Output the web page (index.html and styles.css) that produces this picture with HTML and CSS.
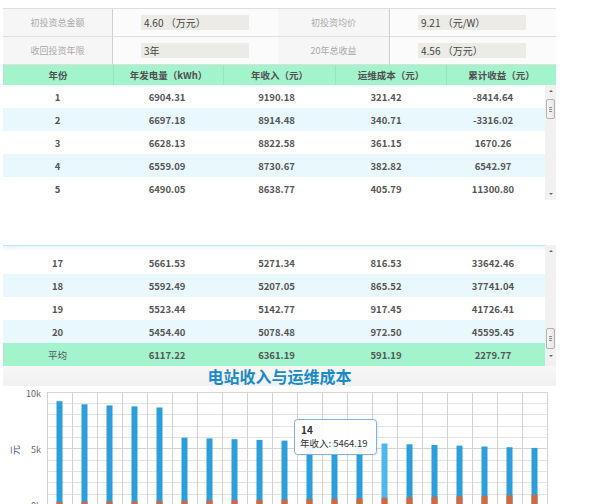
FILE: index.html
```html
<!DOCTYPE html>
<html lang="zh">
<head>
<meta charset="utf-8">
<link rel="stylesheet" href="styles.css">
</head>
<body>
<div class="page">
  <div class="info">
    <div class="lbl">初投资总金额</div>
    <div class="val"><span class="box">4.60 （万元）</span></div>
    <div class="lbl">初投资均价</div>
    <div class="val"><span class="box">9.21 （元/W）</span></div>
    <div class="lbl">收回投资年限</div>
    <div class="val"><span class="box">3年</span></div>
    <div class="lbl">20年总收益</div>
    <div class="val"><span class="box">4.56 （万元）</span></div>
  </div>

  <div class="thead">
    <div>年份</div><div>年发电量（kWh）</div><div>年收入（元）</div><div>运维成本（元）</div><div>累计收益（元）</div>
  </div>

  <div class="tbody">
    <div class="rows">
      <div class="row"><span>1</span><span>6904.31</span><span>9190.18</span><span>321.42</span><span>-8414.64</span></div>
      <div class="row alt"><span>2</span><span>6697.18</span><span>8914.48</span><span>340.71</span><span>-3316.02</span></div>
      <div class="row"><span>3</span><span>6628.13</span><span>8822.58</span><span>361.15</span><span>1670.26</span></div>
      <div class="row alt"><span>4</span><span>6559.09</span><span>8730.67</span><span>382.82</span><span>6542.97</span></div>
      <div class="row"><span>5</span><span>6490.05</span><span>8638.77</span><span>405.79</span><span>11300.80</span></div>
    </div>
    <div class="scroll">
      <div class="arrow up"></div>
      <div class="thumb thumb-top"><i></i><i></i><i></i></div>
      <div class="fill"></div>
      <div class="arrow down"></div>
    </div>
  </div>

  <div class="tbody second">
    <div class="rows">
      <div class="shade"></div>
      <div class="row"><span>17</span><span>5661.53</span><span>5271.34</span><span>816.53</span><span>33642.46</span></div>
      <div class="row alt"><span>18</span><span>5592.49</span><span>5207.05</span><span>865.52</span><span>37741.04</span></div>
      <div class="row"><span>19</span><span>5523.44</span><span>5142.77</span><span>917.45</span><span>41726.41</span></div>
      <div class="row alt"><span>20</span><span>5454.40</span><span>5078.48</span><span>972.50</span><span>45595.45</span></div>
      <div class="row avg"><span class="cn">平均</span><span>6117.22</span><span>6361.19</span><span>591.19</span><span>2279.77</span></div>
    </div>
    <div class="scroll">
      <div class="arrow up"></div>
      <div class="thumb thumb-bottom"><i></i><i></i><i></i></div>
      <div class="fill"></div>
      <div class="arrow down"></div>
    </div>
  </div>

  <div class="chart">
    <div class="chart-title">电站收入与运维成本</div>
    <svg class="plot" width="553" height="130" viewBox="0 0 553 130" xmlns="http://www.w3.org/2000/svg">
      <g stroke="#e3e3e3" stroke-width="1">
        <line x1="44" y1="17.5" x2="544" y2="17.5"/>
        <line x1="44" y1="28.5" x2="544" y2="28.5"/>
        <line x1="44" y1="40.5" x2="544" y2="40.5"/>
        <line x1="44" y1="51.5" x2="544" y2="51.5"/>
        <line x1="44" y1="74.5" x2="544" y2="74.5"/>
        <line x1="44" y1="85.5" x2="544" y2="85.5"/>
        <line x1="44" y1="96.5" x2="544" y2="96.5"/>
        <line x1="44" y1="108.5" x2="544" y2="108.5"/>
      </g>
      <g stroke="#d4d4d4" stroke-width="1">
        <line x1="44" y1="6.5" x2="544" y2="6.5"/>
        <line x1="44" y1="62.5" x2="544" y2="62.5"/>
        <line x1="44" y1="119.5" x2="544" y2="119.5"/>
      </g>
      <g stroke="#d2d2d2" stroke-width="1">
        <line x1="44.5" y1="6" x2="44.5" y2="120"/>
        <line x1="69.5" y1="6" x2="69.5" y2="120"/>
        <line x1="94.5" y1="6" x2="94.5" y2="120"/>
        <line x1="119.5" y1="6" x2="119.5" y2="120"/>
        <line x1="144.5" y1="6" x2="144.5" y2="120"/>
        <line x1="169.5" y1="6" x2="169.5" y2="120"/>
        <line x1="194.5" y1="6" x2="194.5" y2="120"/>
        <line x1="219.5" y1="6" x2="219.5" y2="120"/>
        <line x1="244.5" y1="6" x2="244.5" y2="120"/>
        <line x1="269.5" y1="6" x2="269.5" y2="120"/>
        <line x1="294.5" y1="6" x2="294.5" y2="120"/>
        <line x1="319.5" y1="6" x2="319.5" y2="120"/>
        <line x1="344.5" y1="6" x2="344.5" y2="120"/>
        <line x1="369.5" y1="6" x2="369.5" y2="120"/>
        <line x1="394.5" y1="6" x2="394.5" y2="120"/>
        <line x1="419.5" y1="6" x2="419.5" y2="120"/>
        <line x1="444.5" y1="6" x2="444.5" y2="120"/>
        <line x1="469.5" y1="6" x2="469.5" y2="120"/>
        <line x1="494.5" y1="6" x2="494.5" y2="120"/>
        <line x1="519.5" y1="6" x2="519.5" y2="120"/>
        <line x1="544.5" y1="6" x2="544.5" y2="120"/>
      </g>
      <g class="ylab" font-size="9" fill="#666" text-anchor="end">
        <text x="38" y="10.5">10k</text>
        <text x="38" y="66.5">5k</text>
        <text x="38" y="123">0k</text>
      </g>
      <text class="ytitle" x="0" y="0" transform="translate(16 64) rotate(-90)" text-anchor="middle" font-size="10" fill="#4d6680">元</text>
      <g fill="#2a9fdc">
        <rect x="53.5" y="15.2" width="6" height="104.4"/>
        <rect x="78.5" y="18.3" width="6" height="101.3"/>
        <rect x="103.5" y="19.4" width="6" height="100.2"/>
        <rect x="128.5" y="20.4" width="6" height="99.2"/>
        <rect x="153.5" y="21.5" width="6" height="98.1"/>
        <rect x="178.5" y="51.7" width="6" height="67.9"/>
        <rect x="203.5" y="52.4" width="6" height="67.2"/>
        <rect x="228.5" y="53.2" width="6" height="66.4"/>
        <rect x="253.5" y="53.9" width="6" height="65.7"/>
        <rect x="278.5" y="54.6" width="6" height="65.0"/>
        <rect x="303.5" y="55.3" width="6" height="64.3"/>
        <rect x="328.5" y="56.1" width="6" height="63.5"/>
        <rect x="353.5" y="56.8" width="6" height="62.8"/>
        <rect x="378.5" y="57.5" width="6" height="62.1" fill="#4cb8ee"/>
        <rect x="403.5" y="58.3" width="6" height="61.3"/>
        <rect x="428.5" y="59.0" width="6" height="60.6"/>
        <rect x="453.5" y="59.7" width="6" height="59.9"/>
        <rect x="478.5" y="60.5" width="6" height="59.1"/>
        <rect x="503.5" y="61.2" width="6" height="58.4"/>
        <rect x="528.5" y="61.9" width="6" height="57.7"/>
      </g>
      <g fill="#d2683f">
        <rect x="53.5" y="116.0" width="6" height="3.6"/>
        <rect x="78.5" y="115.7" width="6" height="3.9"/>
        <rect x="103.5" y="115.5" width="6" height="4.1"/>
        <rect x="128.5" y="115.3" width="6" height="4.3"/>
        <rect x="153.5" y="115.0" width="6" height="4.6"/>
        <rect x="178.5" y="114.7" width="6" height="4.9"/>
        <rect x="203.5" y="114.4" width="6" height="5.2"/>
        <rect x="228.5" y="114.1" width="6" height="5.5"/>
        <rect x="253.5" y="113.8" width="6" height="5.8"/>
        <rect x="278.5" y="113.4" width="6" height="6.2"/>
        <rect x="303.5" y="113.1" width="6" height="6.5"/>
        <rect x="328.5" y="112.7" width="6" height="6.9"/>
        <rect x="353.5" y="112.3" width="6" height="7.3"/>
        <rect x="378.5" y="111.8" width="6" height="7.8"/>
        <rect x="403.5" y="111.3" width="6" height="8.3"/>
        <rect x="428.5" y="110.9" width="6" height="8.7"/>
        <rect x="453.5" y="110.3" width="6" height="9.3"/>
        <rect x="478.5" y="109.8" width="6" height="9.8"/>
        <rect x="503.5" y="109.2" width="6" height="10.4"/>
        <rect x="528.5" y="108.6" width="6" height="11.0"/>
      </g>
      <g class="tip">
        <rect x="292.5" y="33.5" width="82" height="35" rx="3" ry="3" fill="#000" opacity="0.06" transform="translate(1 1)"/>
        <rect x="291.5" y="33.5" width="82" height="35" rx="3" ry="3" fill="#ffffff" fill-opacity="0.92" stroke="#7fb2d4" stroke-width="1"/>
        <text x="298" y="48" font-size="10" font-weight="bold" fill="#333">14</text>
        <text x="297" y="61" font-size="9.5" fill="#333">年收入: 5464.19</text>
      </g>
    </svg>
  </div>
</div>
</body>
</html>
```

FILE: styles.css
```css
html, body {
  margin: 0;
  padding: 0;
  background: #ffffff;
}

body {
  font-family: "Noto Sans CJK SC", "Noto Sans", sans-serif;
  color: #555;
}

.page {
  width: 553px;
  margin-left: 3px;
  padding-top: 8px;
}

/* info table */
.info {
  display: grid;
  grid-template-columns: 110px 165px 112px 166px;
  border-top: 1px solid #dedede;
}

.info > div {
  height: 27px;
  border-bottom: 1px solid #dedede;
  display: flex;
  align-items: center;
}

.lbl {
  justify-content: center;
  background: #f6f6f6;
  color: #a9a9a9;
  font-size: 9px;
  border-right: 1px solid #cfcfcf;
}

.val {
  background: #fbfbfb;
  padding-left: 28px;
}

.box {
  display: block;
  width: 105px;
  height: 15px;
  line-height: 15px;
  padding-left: 3px;
  background: #ecebe6;
  color: #444;
  font-size: 10px;
  white-space: nowrap;
}

/* header */
.thead {
  display: grid;
  grid-template-columns: 110px 110px 112px 111px 110px;
  height: 20px;
  background: #a3f3cd;
}

.thead > div {
  display: flex;
  align-items: center;
  justify-content: center;
  font-size: 9.5px;
  font-weight: bold;
  color: #4f4f4f;
  border-left: 1px solid #93e6bf;
}

.thead > div:first-child {
  border-left: none;
}

/* bodies */
.tbody {
  display: flex;
  height: 115px;
}

.tbody.second {
  margin-top: 45px;
  height: 121px;
}

.rows {
  width: 542px;
  display: flex;
  flex-direction: column;
}

.shade {
  height: 5px;
  border-top: 1px solid #c4e6eb;
  background: linear-gradient(#e8f6f8, #ffffff);
}

.row {
  display: grid;
  grid-template-columns: 109px 110px 109px 110px 104px;
  height: 23px;
  background: #ffffff;
}

.row.alt {
  background: #e9f8fc;
}

.row.avg {
  background: #a3f3cd;
}

.row > span {
  display: flex;
  align-items: center;
  justify-content: center;
  font-size: 9.5px;
  font-weight: bold;
  color: #555;
}

.row > span.cn {
  font-weight: normal;
  color: #555;
}

/* scrollbars */
.scroll {
  width: 11px;
  background: #f1f1f1;
  display: flex;
  flex-direction: column;
  align-items: center;
}

.arrow {
  height: 12px;
  width: 11px;
  position: relative;
}

.arrow::after {
  content: "";
  position: absolute;
  left: 4px;
  width: 0;
  height: 0;
  border-left: 2px solid transparent;
  border-right: 2px solid transparent;
}

.arrow.up::after {
  top: 5px;
  border-bottom: 2px solid #666;
}

.arrow.down::after {
  top: 5px;
  border-top: 2px solid #666;
}

.fill {
  flex: 1;
}

.thumb {
  box-sizing: border-box;
  width: 9px;
  height: 20px;
  border: 1px solid #b2b2b2;
  border-radius: 2px;
  background: linear-gradient(90deg, #f7f7f7, #e6e6e6);
  display: flex;
  flex-direction: column;
  align-items: center;
  justify-content: center;
  gap: 1px;
}

.thumb i {
  display: block;
  width: 3px;
  height: 1px;
  background: #8a8a8a;
}

.thumb-top {
  margin-top: 2px;
}

.thumb-bottom {
  margin-top: 71px;
  height: 21px;
}

.tbody.second .arrow.down {
  margin-bottom: 4px;
}

/* chart */
.chart {
  width: 553px;
}

.chart-title {
  height: 20px;
  line-height: 20px;
  background: linear-gradient(#f7f7f7, #f1f1f1);
  text-align: center;
  font-size: 16px;
  font-weight: bold;
  color: #1a8ac9;
}

.plot {
  display: block;
  font-family: "Noto Sans CJK SC", "Noto Sans", sans-serif;
}
```
